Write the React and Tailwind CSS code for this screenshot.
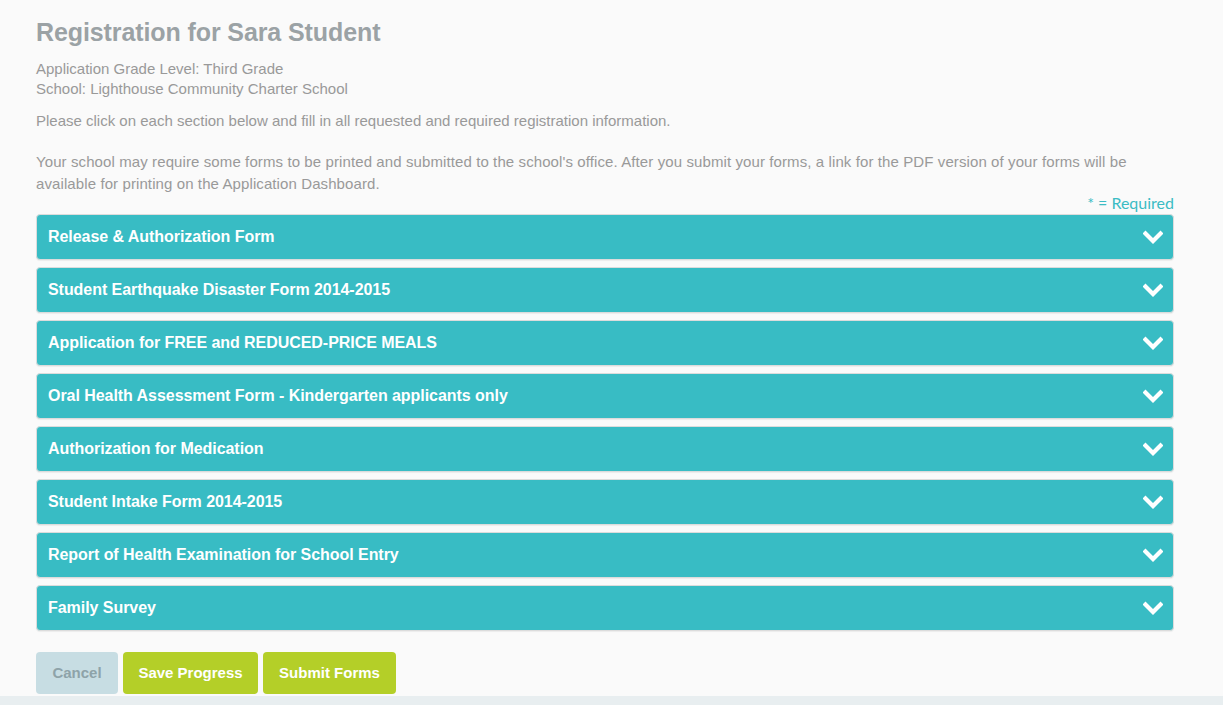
import React from 'react';

const sections = [
  'Release & Authorization Form',
  'Student Earthquake Disaster Form 2014-2015',
  'Application for FREE and REDUCED-PRICE MEALS',
  'Oral Health Assessment Form - Kindergarten applicants only',
  'Authorization for Medication',
  'Student Intake Form 2014-2015',
  'Report of Health Examination for School Entry',
  'Family Survey',
];

function Chevron() {
  return (
    <svg width="20" height="14" viewBox="0 0 20 14" className="shrink-0">
      <path d="M2.5 3.5 L10 11 L17.5 3.5" fill="none" stroke="#ffffff" strokeWidth="4.2" strokeLinecap="square" strokeLinejoin="miter" />
    </svg>
  );
}

export default function App() {
  return (
    <div className="min-h-[705px] bg-[#fafafa] flex flex-col" style={{ fontFamily: '"Liberation Sans", Arial, sans-serif' }}>
      <div className="flex-1 px-[36px] pt-[17px] w-[1174px] box-content">
        <h1 className="text-[25px] font-bold text-[#9ba2a5] leading-[30px] tracking-[-0.1px]">Registration for Sara Student</h1>
        <div className="mt-[12px] text-[15px] leading-[20px] text-[#999999]">
          <p>Application Grade Level: Third Grade</p>
          <p>School: Lighthouse Community Charter School</p>
        </div>
        <p className="mt-[12px] text-[15px] leading-[20px] text-[#999999]">
          Please click on each section below and fill in all requested and required registration information.
        </p>
        <p className="mt-[20px] text-[15px] leading-[22px] text-[#999999] w-[1138px] tracking-[0.1px]">
          Your school may require some forms to be printed and submitted to the school's office. After you submit your forms, a link for the PDF version of your forms will be
          <br />
          available for printing on the Application Dashboard.
        </p>
        <div className="w-[1138px] flex justify-end -mt-[2px]">
          <span className="text-[16px] leading-[20px] text-[#3bbcc4]" style={{ fontFamily: 'Lato, sans-serif' }}>* = Required</span>
        </div>
        <div className="w-[1138px] flex flex-col gap-[7px] mt-[1px]">
          {sections.map((s) => (
            <div key={s} className="h-[46px] rounded-[4px] bg-[#38bcc4] border border-[#dcdcdc] shadow-[0_1px_1px_rgba(0,0,0,0.06)] flex items-center justify-between pl-[11px] pr-[10px]">
              <span className="text-[16px] font-bold text-white tracking-[-0.05px]">{s}</span>
              <Chevron />
            </div>
          ))}
        </div>
        <div className="flex gap-[5px] mt-[21px]">
          <button className="h-[42px] w-[82px] rounded-[4px] bg-[#c7dde3] text-[#8ea3a9] text-[15px] font-bold">Cancel</button>
          <button className="h-[42px] w-[135px] rounded-[4px] bg-[#b4cf28] text-white text-[15px] font-bold">Save Progress</button>
          <button className="h-[42px] w-[133px] rounded-[4px] bg-[#b4cf28] text-white text-[15px] font-bold">Submit Forms</button>
        </div>
      </div>
      <div className="h-[9px] bg-[#e8eef0]" />
    </div>
  );
}
